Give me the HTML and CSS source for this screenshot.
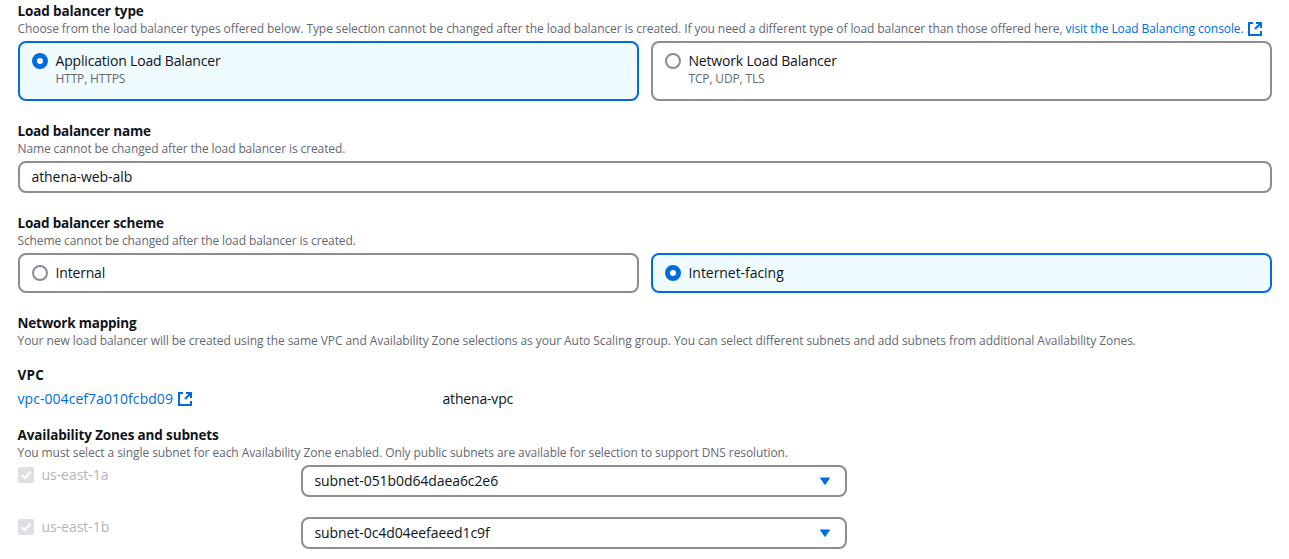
FILE: index.html
```
<!DOCTYPE html>
<html lang="en">
<head>
<meta charset="utf-8">
<title>Load balancer</title>
<link rel="stylesheet" href="styles.css">
</head>
<body>
<main class="form">
  <section class="field">
    <h3 class="label">Load balancer type</h3>
    <p class="hint">Choose from the load balancer types offered below. Type selection cannot be changed after the load balancer is created. If you need a different type of load balancer than those offered here, <a class="link" href="#">visit the Load Balancing console. <svg class="ext" viewBox="0 0 16 16"><path d="M6 2H2V14H14V10M9 2H14V7M14 2L8 8"/></svg></a></p>
    <div class="tiles">
      <div class="tile selected"><span class="radio on"></span><div><div class="tile-title">Application Load Balancer</div><div class="tile-desc">HTTP, HTTPS</div></div></div>
      <div class="tile"><span class="radio"></span><div><div class="tile-title">Network Load Balancer</div><div class="tile-desc">TCP, UDP, TLS</div></div></div>
    </div>
  </section>
  <section class="field">
    <h3 class="label tight">Load balancer name</h3>
    <p class="hint snug">Name cannot be changed after the load balancer is created.</p>
    <div class="input">athena-web-alb</div>
  </section>
  <section class="field">
    <h3 class="label tight">Load balancer scheme</h3>
    <p class="hint snug">Scheme cannot be changed after the load balancer is created.</p>
    <div class="tiles short">
      <div class="tile"><span class="radio"></span><div class="tile-title">Internal</div></div>
      <div class="tile selected"><span class="radio on"></span><div class="tile-title facing">Internet-facing</div></div>
    </div>
  </section>
  <section class="field mapping">
    <h3 class="label tight">Network mapping</h3>
    <p class="hint loose">Your new load balancer will be created using the same VPC and Availability Zone selections as your Auto Scaling group. You can select different subnets and add subnets from additional Availability Zones.</p>
  </section>
  <section class="field vpc">
    <h3 class="label vpc-label">VPC</h3>
    <div class="vpc-row"><a class="link vpc-link" href="#">vpc-004cef7a010fcbd09 <svg class="ext" viewBox="0 0 16 16"><path d="M6 2H2V14H14V10M9 2H14V7M14 2L8 8"/></svg></a><span class="vpc-name">athena-vpc</span></div>
  </section>
  <section class="field zones">
    <h3 class="label">Availability Zones and subnets</h3>
    <p class="hint">You must select a single subnet for each Availability Zone enabled. Only public subnets are available for selection to support DNS resolution.</p>
    <div class="zone"><div class="zone-name"><svg class="check" viewBox="0 0 16 16"><rect width="16" height="16" rx="2"/><path d="M3.5 8L6.8 11.2L12.5 4.5"/></svg>us-east-1a</div><div class="select">subnet-051b0d64daea6c2e6<svg class="caret" viewBox="0 0 12 9"><path d="M1.5 1H10.5L6 7.5Z"/></svg></div></div>
    <div class="zone"><div class="zone-name"><svg class="check" viewBox="0 0 16 16"><rect width="16" height="16" rx="2"/><path d="M3.5 8L6.8 11.2L12.5 4.5"/></svg>us-east-1b</div><div class="select">subnet-0c4d04eefaeed1c9f<svg class="caret" viewBox="0 0 12 9"><path d="M1.5 1H10.5L6 7.5Z"/></svg></div></div>
  </section>
</main>
</body>
</html>
```
FILE: styles.css
```
* { box-sizing: border-box; }
body { margin: 0; background: #fff; color: #0f141a; font: 14px/20px "Open Sans", "Noto Sans", sans-serif; overflow: hidden; }
.form { padding: 1px 17px 0 18px; }
.field { margin-bottom: 20px; }
.label { margin: 0; font-size: 13.5px; line-height: 20px; font-weight: 700; letter-spacing: -0.14px; text-indent: -0.5px; }
.label.tight { letter-spacing: -0.2px; }
.label.vpc-label { letter-spacing: 0.2px; }
.hint { margin: 0 0 4px; height: 16px; font-size: 12px; line-height: 16px; color: #656871; white-space: nowrap; letter-spacing: -0.08px; text-indent: -0.5px; }
.hint.snug { letter-spacing: -0.11px; }
.hint.loose { letter-spacing: -0.069px; }
.link { color: #006ce0; text-decoration: none; }
.ext { width: 16px; height: 16px; fill: none; stroke: currentColor; stroke-width: 2; vertical-align: -3px; }
.hint .ext { margin: -4px 0; vertical-align: 0; }
.tiles { display: grid; grid-template-columns: 1fr 1fr; gap: 12px; height: 60px; }
.tiles.short { height: 40px; }
.tile { display: flex; gap: 8px; padding: 8px 12px; border: 2px solid #8c8c94; border-radius: 8px; text-indent: -0.5px; }
.tile.selected { border-color: #006ce0; background: #f0fbff; }
.radio { width: 16px; height: 16px; margin-top: 2px; border: 2px solid #8c8c94; border-radius: 50%; background: #fff; }
.radio.on { border: 5px solid #006ce0; }
.tile-title { letter-spacing: -0.18px; }
.tile-title.facing { letter-spacing: -0.05px; }
.tile-desc { font-size: 12px; line-height: 16px; color: #656871; letter-spacing: -0.15px; }
.input, .select { border: 2px solid #8c8c94; border-radius: 8px; height: 32px; padding: 4px 12px; letter-spacing: -0.08px; text-indent: -0.5px; }
.mapping, .vpc { margin-bottom: 16px; }
.mapping .hint { margin-bottom: 0; }
.vpc-link { letter-spacing: 0.05px; text-indent: -0.5px; }
.vpc-name { letter-spacing: -0.18px; text-indent: -0.5px; }
.vpc-row { display: grid; grid-template-columns: 425px 1fr; height: 20px; margin-top: 4px; }
.zones { margin-bottom: 0; }
.zone { display: grid; grid-template-columns: 283px 546px; height: 52px; }
.zone:last-child { height: 32px; }
.zone-name { display: flex; gap: 7.5px; color: #b4b4bb; letter-spacing: -0.05px; }
.check { width: 16px; height: 16px; margin-top: 2px; }
.check rect { fill: #dedee3; }
.check path { fill: none; stroke: #fff; stroke-width: 2; }
.select { display: flex; justify-content: space-between; align-items: center; padding-right: 14px; }
.caret { width: 12px; height: 9px; fill: #006ce0; stroke: #006ce0; stroke-width: 1; stroke-linejoin: round; }
```
